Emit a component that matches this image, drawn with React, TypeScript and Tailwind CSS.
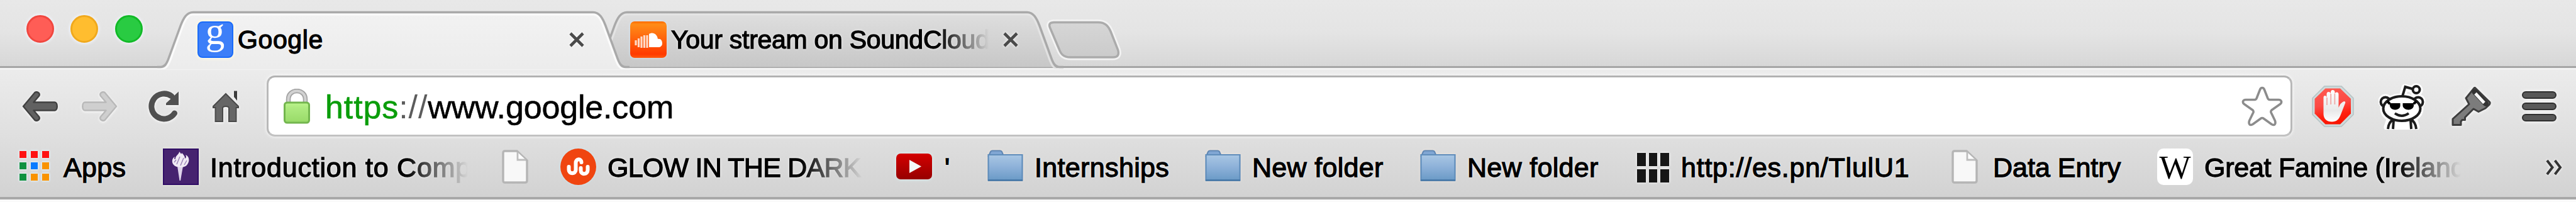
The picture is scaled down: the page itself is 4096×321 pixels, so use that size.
import type { ReactNode } from "react";

const SANS = "font-['Liberation_Sans',Arial,sans-serif]";
const HALO =
  "[text-shadow:0_0_3px_rgba(255,255,255,0.9),0_0_5px_rgba(255,255,255,0.7)] [-webkit-text-stroke:1.300px_#000]";

function TrafficLight({ className }: { className: string }) {
  return (
    <span
      className={`block h-[44px] w-[44px] shrink-0 rounded-full border-[3px] shadow-[0_0_4px_2px_rgba(245,248,255,0.7)] ${className}`}
    />
  );
}

function CloseIcon() {
  return (
    <svg width="26" height="26" viewBox="0 0 26 26" className="block shrink-0 drop-shadow-[0_0_2px_#fff]">
      <path d="M3 3L23 23M23 3L3 23" stroke="#4a4a4a" strokeWidth="4.6" fill="none" />
    </svg>
  );
}

function TabShape({ active }: { active: boolean }) {
  const id = active ? "tab-active" : "tab-idle";
  const edge =
    "M0 106.5H5C12 106.5 15 101 18 93L37 41C42 28 47 19.5 57 19.5H693C703 19.5 708 28 713 41L732 93C735 101 738 106.5 745 106.5H751";
  const inner =
    "M0 110H6C15 110 18 103 21.500 94L40.500 42C45 30 49 23 58 23H692C701 23 705 30 709.500 42L728.500 94C732 103 735 110 744 110H751";
  return (
    <svg width="751" height="110" viewBox="0 0 751 110" className="absolute left-0 top-0 block">
      <defs>
        <linearGradient id={id} x1="0" y1="0" x2="0" y2="1">
          <stop offset="0" stopColor={active ? "#f2f2f2" : "#dfdfdf"} />
          <stop offset="1" stopColor={active ? "#ececec" : "#c7c7c7"} />
        </linearGradient>
      </defs>
      {active ? (
        <path d={edge + "V110H0Z"} fill={`url(#${id})`} />
      ) : (
        <path d={edge + "Z"} fill={`url(#${id})`} />
      )}
      <path d={inner} fill="none" stroke={active ? "#fbfbfb" : "#e6e6e6"} strokeWidth="3" opacity={active ? 1 : 0.8} />
      <path d={edge} fill="none" stroke="#a9a9a9" strokeWidth="3.5" />
    </svg>
  );
}

function NewTabButton() {
  return (
    <svg width="130" height="68" viewBox="1660 29 130 68" className="ml-[-31px] mt-[29px] block shrink-0">
      <defs>
        <linearGradient id="newtab" x1="0" y1="0" x2="0" y2="1">
          <stop offset="0" stopColor="#d6d6d6" />
          <stop offset="1" stopColor="#cbcbcb" />
        </linearGradient>
      </defs>
      <path
        d="M1676 35.500H1746C1757 35.500 1762 41 1766 50L1777.500 79C1780 87 1777 91 1770 91H1702C1691 91 1687 86 1684 78L1670 45C1667 39 1669 35.500 1676 35.500Z"
        fill="none"
        stroke="#f3f3f3"
        strokeWidth="9"
      />
      <path
        d="M1676 35.500H1746C1757 35.500 1762 41 1766 50L1777.500 79C1780 87 1777 91 1770 91H1702C1691 91 1687 86 1684 78L1670 45C1667 39 1669 35.500 1676 35.500Z"
        fill="url(#newtab)"
        stroke="#ababab"
        strokeWidth="3.5"
      />
    </svg>
  );
}

function GoogleIcon() {
  return (
    <span className="flex h-[58px] w-[57px] shrink-0 justify-center rounded-[8px] border-[2px] border-[#1a6bfa] bg-[#3d7ff8] font-['Liberation_Serif',serif] text-[61px] leading-[28px] text-white shadow-[0_0_4px_2px_rgba(255,250,225,0.9)]">
      g
    </span>
  );
}

function SoundCloudIcon() {
  return (
    <svg width="58" height="58" viewBox="0 0 58 58" className="block shrink-0 drop-shadow-[0_0_2px_#d5e9f8]">
      <defs>
        <linearGradient id="sc" x1="0" y1="0" x2="0" y2="1">
          <stop offset="0" stopColor="#ff6a00" />
          <stop offset="0.08" stopColor="#ff8c18" />
          <stop offset="0.9" stopColor="#ff3a00" />
          <stop offset="1" stopColor="#ff5a10" />
        </linearGradient>
      </defs>
      <rect width="58" height="58" rx="7" fill="url(#sc)" />
      <path d="M30 41V20C36 16 43 20 44 28C49 27 51 31 51 35C51 39 48 41 45 41Z" fill="#fff" />
      <path d="M9 30V38M13.500 27V41M18 24V42M22.500 22V42M27 22V42" stroke="#ffd9c6" strokeWidth="3.2" />
    </svg>
  );
}

function BackArrow({ light = false }: { light?: boolean }) {
  return (
    <svg
      width="60"
      height="54"
      viewBox="0 0 60 54"
      className={`block shrink-0 drop-shadow-[0_1px_2px_#fff] ${light ? "-scale-x-100" : ""}`}
    >
      <path
        d="M4 27L22 5.500C25 2.500 32 6 29 10.500L20.500 20.500H54C59 20.500 59 33.500 54 33.500H20.500L29 43.500C32 48 25 51.500 22 48.500Z"
        fill={light ? "#cfcfcf" : "#616161"}
        stroke={light ? "#b9b9b9" : "#414141"}
        strokeWidth="2.5"
        strokeLinejoin="round"
      />
    </svg>
  );
}

function ReloadIcon() {
  return (
    <svg width="52" height="52" viewBox="0 0 52 52" className="block shrink-0 drop-shadow-[0_1px_2px_#fff]">
      <path d="M43.500 37A20 20 0 1 1 39 10" fill="none" stroke="#505050" strokeWidth="9" strokeLinecap="round" />
      <path d="M50 2.500V24H30V21Z" fill="#505050" />
    </svg>
  );
}

function HomeIcon() {
  return (
    <svg width="46" height="52" viewBox="0 0 46 52" className="block shrink-0 drop-shadow-[0_1px_2px_#fff]">
      <path d="M36 1.500H41V17L36 11Z" fill="#3c3c3c" />
      <path
        d="M23 6L43 26V28H39.500V50H28V29Q28 26 23 26Q18 26 18 29V50H6.500V28H3V26Z"
        fill="#666"
        stroke="#4a4a4a"
        strokeWidth="2"
      />
    </svg>
  );
}

function LockIcon() {
  return (
    <svg width="44" height="56" viewBox="0 0 44 56" className="block shrink-0">
      <defs>
        <linearGradient id="lock" x1="0" y1="0" x2="0" y2="1">
          <stop offset="0" stopColor="#bdf58c" />
          <stop offset="0.25" stopColor="#aeea80" />
          <stop offset="1" stopColor="#98da68" />
        </linearGradient>
      </defs>
      <path d="M8.500 24V17C8.500 -1 35.500 -1 35.500 17V24" fill="none" stroke="#a3a3a3" strokeWidth="7.500" />
      <path d="M8.500 24V17C8.500 -1 35.500 -1 35.500 17V24" fill="none" stroke="#d2d2d2" strokeWidth="4" />
      <rect x="2.500" y="22" width="39" height="32" rx="4" fill="url(#lock)" stroke="#73b64e" strokeWidth="3" />
    </svg>
  );
}

function StarIcon() {
  return (
    <svg width="66" height="66" viewBox="0 0 66 66" className="block shrink-0">
      <path
        d="M29.500 6.500C31 2.500 35 2.500 36.500 6.500L42 20.500Q43 22.500 45 22.500H59C64 22.500 65 27 61.500 29.500L48 39Q46.500 40.500 47 42.500L53.500 56C55 61.500 52.500 64 48 61.500L35.500 52.500Q33 50.500 30.500 52.500L18 61.500C13.500 64 11 61.500 12.500 56L19 42.500Q19.500 40.500 18 39L4.500 29.500C1 27 2 22.500 7 22.500H21Q23 22.500 24 20.500Z"
        fill="#fff"
        stroke="#8c8c8c"
        strokeWidth="3.600"
        strokeLinejoin="round"
      />
    </svg>
  );
}

function AdBlockIcon() {
  return (
    <svg width="68" height="68" viewBox="0 0 68 68" className="block shrink-0">
      <defs>
        <linearGradient id="abp" x1="0.300" y1="0" x2="0.500" y2="1">
          <stop offset="0" stopColor="#ff5a50" />
          <stop offset="0.450" stopColor="#fb4a44" />
          <stop offset="0.750" stopColor="#ff2010" />
          <stop offset="1" stopColor="#f81400" />
        </linearGradient>
        <linearGradient id="hand" x1="0" y1="0" x2="0" y2="1">
          <stop offset="0" stopColor="#fff" />
          <stop offset="0.650" stopColor="#e9e9e9" />
          <stop offset="1" stopColor="#fff" />
        </linearGradient>
      </defs>
      <path d="M21 2H48L67 21V47L48 66H21L2 47V21Z" fill="#cfdadb" stroke="#b3c2c4" strokeWidth="1.500" />
      <path d="M22.500 5.500H46L63 22V45.500L46 62.500H22.500L5.500 45.500V22Z" fill="url(#abp)" />
      <path
        d="M19.500 46V20Q19.500 17 22 17Q24 17 24.500 20V14Q25 11 27.500 11Q30.500 11 31 14V11Q31.500 8 34 8Q37 8 37.500 11V14Q38 11.500 40.500 11.500Q43.500 11.500 43.500 15V36Q46.500 28 52 26Q55 26 54 29L47 47C44 55 40 58.500 33 58.500C25 58.500 19.500 54 19.500 46Z"
        fill="url(#hand)"
      />
      <path d="M25 20V32M31.200 14V31M37.400 14V31" stroke="#f0a9a6" strokeWidth="1.800" />
    </svg>
  );
}

function RedditIcon() {
  return (
    <svg width="76" height="74" viewBox="0 0 76 74" className="block shrink-0">
      <g fill="#fff" stroke="#fff" strokeWidth="11" strokeLinejoin="round">
        <path d="M18 58L14 70H60L56 58Z" />
        <ellipse cx="37" cy="41" rx="29" ry="19" />
        <circle cx="11" cy="29" r="6" />
        <circle cx="63" cy="29" r="6" />
        <path d="M38 22L42 7L58 11" fill="none" />
        <circle cx="60" cy="11" r="5" />
      </g>
      <g fill="#fff" stroke="#1c1c1c" strokeWidth="4">
        <path d="M24 57Q16 62 15 73M24 59L23 73M51 59L52 73M51 57Q59 62 60 73" fill="none" />
        <circle cx="11" cy="30" r="7.500" />
        <circle cx="63" cy="30" r="7.500" />
        <ellipse cx="37" cy="40.500" rx="29.500" ry="19.500" />
        <path d="M38 21L42.500 6L55 9.500" fill="none" />
        <circle cx="60" cy="10.500" r="5.500" />
        <path d="M26 48Q37 56 48 48" fill="none" />
      </g>
      <path d="M17 32H34.500V36C34.500 44 19 45 18 36ZM38.500 32H56V36C55 45 39.500 44 38.500 36Z" fill="#000" />
      <path d="M14 29L18 33M60 29L56 33" stroke="#000" strokeWidth="4" />
    </svg>
  );
}

function KeyIcon() {
  return (
    <svg width="66" height="66" viewBox="0 0 66 66" className="block shrink-0 drop-shadow-[0_0_3px_#fff]">
      <path
        d="M41 4L63.500 26Q65 28 63 30.500L57 36L46 41.500L38 37L24.500 50.500V54.500H20L18 57V62.500H5V53L31 29.500L26 20L39 4Q40 3 41 4Z"
        fill="#7c7c7c"
        stroke="#3d3d3d"
        strokeWidth="3"
        strokeLinejoin="round"
      />
      <path d="M40 10L57.500 28.500" stroke="#333" strokeWidth="9" strokeLinecap="round" />
      <path d="M41 12.500L55 27.500" stroke="#f8f8f8" strokeWidth="5" />
    </svg>
  );
}

function MenuIcon() {
  return (
    <span className="flex w-[55px] shrink-0 flex-col gap-[6px] drop-shadow-[0_0_3px_#fff]">
      <span className="h-[12px] rounded-full border-[2.5px] border-[#2f2f2f] bg-[#585858]" />
      <span className="h-[12px] rounded-full border-[2.5px] border-[#2f2f2f] bg-[#585858]" />
      <span className="h-[12px] rounded-full border-[2.5px] border-[#2f2f2f] bg-[#585858]" />
    </span>
  );
}

function AppsIcon() {
  const cells = [
    "bg-[#ff1212]",
    "bg-[#ff1212]",
    "bg-[#ff1212]",
    "bg-[#0f9140]",
    "bg-[#0a7bff]",
    "bg-[#f99300]",
    "bg-[#0f9140]",
    "bg-[#f99300]",
    "bg-[#f99300]",
  ];
  return (
    <span className="grid w-[47px] shrink-0 grid-cols-3 gap-[7px] pb-[3px]">
      {cells.map((c, i) => (
        <span key={i} className={`h-[11px] w-[11px] shadow-[0_0_3px_1px_rgba(235,250,255,0.8)] ${c}`} />
      ))}
    </span>
  );
}

function TorchIcon() {
  return (
    <svg width="57" height="58" viewBox="0 0 57 58" className="block shrink-0 drop-shadow-[0_0_2px_#f3f3e4]">
      <rect width="57" height="58" fill="#2f0d66" />
      <rect x="2" y="2" width="53" height="54" fill="#46236f" />
      <path d="M23 28L26.500 51H28L32 28Z" fill="#ded3ea" />
      <path
        d="M22 29C13 26 13 16 19 13C17 17 19 18 20 16C20 11 26 9 26 5C29 8 29 10 30 7C33 10 35 12 35 16C38 14 37 12 36 10C41 12 42 17 41 21C39 27 36 29 30 30Z"
        fill="#f0eaf5"
      />
      <path d="M22 25L27 13M28 27L33 15M34 26L38 19M18 22L21 18" stroke="#9c86b8" strokeWidth="1.500" />
    </svg>
  );
}

function PageIcon() {
  return (
    <svg width="42" height="54" viewBox="0 0 42 54" className="block shrink-0">
      <path
        d="M5 2H24L40 17V49Q40 52 37 52H5Q2 52 2 49V5Q2 2 5 2Z"
        fill="#f8f8f8"
        stroke="#b5b5b5"
        strokeWidth="3.400"
      />
      <path d="M25 4V16H38" fill="#fff" stroke="#bdbdbd" strokeWidth="2.800" />
    </svg>
  );
}

function StumbleIcon() {
  return (
    <svg width="57" height="58" viewBox="0 0 57 58" className="block shrink-0 drop-shadow-[0_0_2px_#cdeaf2]">
      <ellipse cx="28.500" cy="29" rx="28.500" ry="29" fill="#f04510" />
      <path
        d="M13.500 29V34C13.500 41 24.500 41 24.500 34V23C24.500 15.500 33.500 15.500 33.500 22"
        fill="none"
        stroke="#fff"
        strokeWidth="6"
        strokeLinecap="round"
      />
      <path d="M32.500 31V35C32.500 42 43.500 42 43.500 34V29" fill="none" stroke="#fff" strokeWidth="6" strokeLinecap="round" />
    </svg>
  );
}

function VideoIcon() {
  return (
    <svg width="57" height="41" viewBox="0 0 57 41" className="block shrink-0 drop-shadow-[0_0_3px_#dcf3f4]">
      <defs>
        <linearGradient id="yt" x1="0" y1="0" x2="0" y2="1">
          <stop offset="0" stopColor="#d40000" />
          <stop offset="1" stopColor="#960000" />
        </linearGradient>
      </defs>
      <rect width="57" height="41" rx="7" fill="url(#yt)" />
      <path d="M21 10L40 20.500L21 31Z" fill="#f4f8f8" />
    </svg>
  );
}

function FolderIcon({ id }: { id: string }) {
  return (
    <svg width="57" height="50" viewBox="0 0 57 50" className="mb-[4px] block shrink-0 drop-shadow-[0_0_2px_#efe6df]">
      <defs>
        <linearGradient id={id} x1="0" y1="0" x2="0" y2="1">
          <stop offset="0" stopColor="#a9c7e4" />
          <stop offset="0.500" stopColor="#8cb0d8" />
          <stop offset="1" stopColor="#6a9ac6" />
        </linearGradient>
      </defs>
      <path d="M2 10L5 3Q6 1.500 8 1.500H20Q22 1.500 23 3L26 10Z" fill="#80a6d3" stroke="#5f86b2" strokeWidth="2" />
      <path d="M1.500 8H55.500V48.500H1.500Z" fill={`url(#${id})`} stroke="#5f8dbb" strokeWidth="2.200" />
      <path d="M1 48.500H56" stroke="#4476a6" strokeWidth="2.500" />
    </svg>
  );
}

function GridIcon() {
  return (
    <span className="grid w-[51px] shrink-0 grid-cols-3 gap-x-[5px] gap-y-[5px] pt-[4px] drop-shadow-[0_0_2px_#fff]">
      {[0, 1, 2, 3, 4, 5].map((i) => (
        <span key={i} className="h-[21px] bg-[#161616]" />
      ))}
    </span>
  );
}

function WikiIcon() {
  return (
    <span className="flex h-[58px] w-[57px] shrink-0 items-center justify-center rounded-[10px] bg-white font-['Liberation_Serif',serif] text-[53px] leading-[58px] text-black">
      <span className="mt-[3px]">W</span>
    </span>
  );
}

function Bookmark({
  icon,
  label,
  box,
  text = "",
}: {
  icon: ReactNode;
  label?: string;
  box: string;
  text?: string;
}) {
  return (
    <div className={`flex h-full shrink-0 items-center ${box}`}>
      {icon}
      {label ? (
        <span
          className={`block shrink-0 overflow-hidden whitespace-nowrap px-[4px] pt-[2px] text-[43px] leading-[56px] text-black ${HALO} ${text}`}
        >
          {label}
        </span>
      ) : null}
    </div>
  );
}

export default function App() {
  return (
    <div className={`flex h-[321px] w-[4096px] flex-col overflow-hidden bg-[#fafafa] ${SANS}`}>
      <header className="flex h-[108px] shrink-0 border-b-[3px] border-[#a6a6a6] bg-linear-to-b from-[#e8e8e8] via-[#e4e4e4] to-[#d7d7d7]">
        <div className="flex w-[250px] shrink-0 gap-[26.500px] pl-[41.500px] pt-[23.500px]">
          <TrafficLight className="border-[#f0473f] bg-[#ff5d56]" />
          <TrafficLight className="border-[#f0a91d] bg-[#ffbd2f]" />
          <TrafficLight className="border-[#12ba27] bg-[#29cb42]" />
        </div>
        <div className="relative z-10 h-[110px] w-[751px] shrink-0">
          <TabShape active />
          <div className="relative flex h-[108px] items-center pl-[63.500px] pr-[71px] pt-[18px]">
            <GoogleIcon />
            <span
              className={`ml-[7.500px] whitespace-nowrap text-[41px] leading-[50px] tracking-[0.6px] text-black ${HALO}`}
            >
              Google
            </span>
            <span className="ml-auto">
              <CloseIcon />
            </span>
          </div>
        </div>
        <div className="relative ml-[-61.500px] h-[110px] w-[751px] shrink-0">
          <TabShape active={false} />
          <div className="relative flex h-[108px] items-center pl-[62.500px] pr-[71px] pt-[18px]">
            <SoundCloudIcon />
            <span
              className={`ml-[4px] w-[508px] overflow-hidden whitespace-nowrap pl-[3px] text-[41px] leading-[50px] tracking-[-0.28px] text-black [mask-image:linear-gradient(to_right,#000_84%,transparent)] ${HALO}`}
            >
              Your stream on SoundCloud
            </span>
            <span className="ml-auto">
              <CloseIcon />
            </span>
          </div>
        </div>
        <NewTabButton />
      </header>

      <div className="flex h-[209px] shrink-0 flex-col border-b-[4px] border-[#a8a8a8] bg-linear-to-b from-[#ececec] via-[#e0e0e0] to-[#d2d2d2]">
        <div className="flex h-[120px] shrink-0 items-center border-t-[3px] border-[#f3f3f3] pb-[2px] pl-[33px]">
          <BackArrow />
          <span className="ml-[36px]">
            <BackArrow light />
          </span>
          <span className="ml-[45px]">
            <ReloadIcon />
          </span>
          <span className="ml-[50px]">
            <HomeIcon />
          </span>
          <div className="ml-[42px] flex h-[97px] w-[3221px] shrink-0 items-center rounded-[13px] border-[3.500px] border-t-[#b2b2b2] border-x-[#b9b9b9] border-b-[#c2c2c2] bg-white pl-[23px] pr-[12px] shadow-[0_0_5px_1px_rgba(255,255,255,0.7)]">
            <LockIcon />
            <span className="ml-[23px] whitespace-nowrap pt-[3px] text-[52px] leading-[70px]">
              <span className="tracking-[0.9px] text-[#0a9d0a] [-webkit-text-stroke:0.6px_#0a9d0a]">https</span>
              <span className="tracking-[0.9px] text-[#5c5c5c]">://</span>
              <span className="tracking-[-0.16px] text-black [-webkit-text-stroke:0.6px_#000]">www.google.com</span>
            </span>
            <span className="ml-auto">
              <StarIcon />
            </span>
          </div>
          <span className="ml-[30px]">
            <AdBlockIcon />
          </span>
          <span className="ml-[39px]">
            <RedditIcon />
          </span>
          <span className="ml-[37px]">
            <KeyIcon />
          </span>
          <span className="ml-[49px]">
            <MenuIcon />
          </span>
        </div>

        <nav className="flex h-[85px] shrink-0 items-center pb-[12px] pl-[31px] pr-[21px]">
          <Bookmark icon={<AppsIcon />} label="Apps" box="w-[228px]" text="ml-[19px] tracking-[0.3px]" />
          <Bookmark
            icon={<TorchIcon />}
            label="Introduction to Comp"
            box="w-[539px]"
            text="ml-[14px] w-[414px] tracking-[0.79px] [mask-image:linear-gradient(to_right,#000_76%,transparent)]"
          />
          <Bookmark icon={<PageIcon />} box="w-[93px]" />
          <Bookmark
            icon={<StumbleIcon />}
            label="GLOW IN THE DARK"
            box="w-[534px]"
            text="ml-[14px] w-[410px] tracking-[-0.77px] [mask-image:linear-gradient(to_right,#000_76%,transparent)]"
          />
          <Bookmark icon={<VideoIcon />} label="'" box="w-[145px]" text="ml-[16px]" />
          <Bookmark
            icon={<FolderIcon id="folder-a" />}
            label="Internships"
            box="w-[346px]"
            text="ml-[14px] tracking-[0.35px]"
          />
          <Bookmark
            icon={<FolderIcon id="folder-b" />}
            label="New folder"
            box="w-[342px]"
            text="ml-[14px] tracking-[0.3px]"
          />
          <Bookmark
            icon={<FolderIcon id="folder-c" />}
            label="New folder"
            box="w-[345px]"
            text="ml-[14px] tracking-[0.3px]"
          />
          <Bookmark
            icon={<GridIcon />}
            label="http://es.pn/TlulU1"
            box="w-[500px]"
            text="ml-[15px] tracking-[0.76px]"
          />
          <Bookmark icon={<PageIcon />} label="Data Entry" box="w-[327px]" text="ml-[20px]" />
          <Bookmark
            icon={<WikiIcon />}
            label="Great Famine (Ireland"
            box="w-[500px]"
            text="ml-[14px] w-[412px] tracking-[-0.25px] [mask-image:linear-gradient(to_right,#000_75%,transparent)]"
          />
          <svg width="28" height="26" viewBox="0 0 28 26" className="ml-auto mt-[2px] block shrink-0 drop-shadow-[0_0_2px_#fff]">
            <path d="M3 2L11.500 13L3 24M15.500 2L24 13L15.500 24" fill="none" stroke="#333" strokeWidth="4" />
          </svg>
        </nav>
      </div>
    </div>
  );
}
